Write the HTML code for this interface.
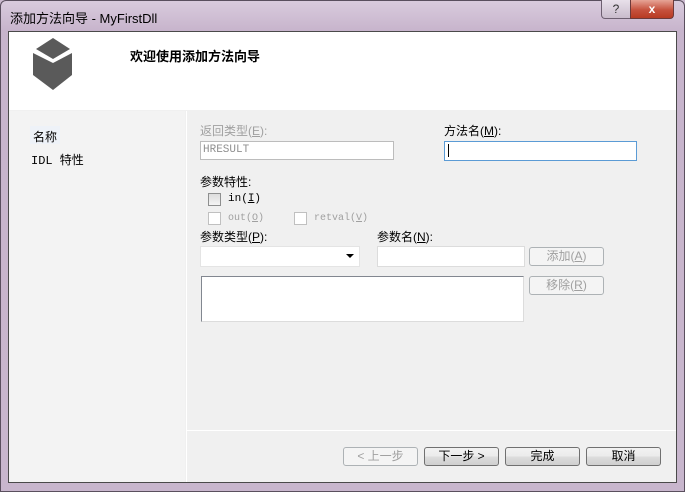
<!DOCTYPE html><html><head><style>
body{margin:0;width:685px;height:492px;overflow:hidden;background:#cbbacf;font-family:"Liberation Sans","Noto Sans CJK SC",sans-serif;font-size:12px;position:relative}
.a{position:absolute}
.frame{left:0;top:0;width:683px;height:490px;border:1px solid #5a4f5e;border-radius:6px 6px 0 0;background:linear-gradient(#d9cbdd,#c7b4cc 30px,#c8b6cd)}
.client{left:8px;top:31px;width:667px;height:450px;border:1px solid #4a4a4a;background:#f0f0f0}
.tb{font-family:"Liberation Mono","Noto Sans CJK SC",monospace;font-size:11px}
.in{background:#fff;border:1px solid #abadb3}
.btn{border:1px solid #707070;border-radius:3px;background:linear-gradient(#f2f2f2,#ebebeb 50%,#dddddd 51%,#cfcfcf);text-align:center;line-height:17px;font-size:12px}
.dis{border-color:#adb2b5;background:#f4f4f4;color:#a0a0a0}
.cb{width:11px;height:11px;border:1px solid #c0c0c0;background:#fff}
</style></head><body>
<div class="a frame"></div>
<div class="a" style="left:10px;top:8px;font-size:13px;color:#000">添加方法向导 - MyFirstDll</div>
<div class="a" style="left:601px;top:0;width:28px;height:18px;border:1px solid #6d5f70;border-top:0;border-radius:0 0 0 4px;background:linear-gradient(#e8e0ea,#c9bccc);text-align:center;color:#333;font-size:12px;line-height:18px">?</div>
<div class="a" style="left:630px;top:0;width:42px;height:18px;border:1px solid #6d3a3a;border-top:0;border-radius:0 0 4px 0;background:linear-gradient(#e6a497,#c6523e 55%,#b83a22);text-align:center;color:#fff;font-weight:bold;font-size:12px;line-height:18px">x</div>
<div class="a client"></div>
<div class="a" style="left:9px;top:32px;width:667px;height:78px;background:#fff"></div>
<svg class="a" style="left:0;top:0" width="90" height="100"><polygon points="53,38 70,49 53,59 36,49" fill="#5a5a5a"/><polygon points="33,53 53,63 72,53 72,75 53,90 33,75" fill="#5a5a5a"/></svg>
<div class="a" style="left:130px;top:46px;font-weight:bold;font-size:13px">欢迎使用添加方法向导</div>
<div class="a" style="left:9px;top:111px;width:176px;height:371px;background:#f3f3f3"></div>
<div class="a" style="left:186px;top:111px;width:1px;height:371px;background:#fff"></div>
<div class="a" style="left:187px;top:430px;width:489px;height:1px;background:#fff"></div>
<div class="a" style="left:30px;top:126px;width:30px;height:18px;background:#eef2f8"></div>
<div class="a" style="left:33px;top:128px">名称</div>
<div class="a tb" style="left:31px;top:151px;font-size:12px">IDL 特性</div>
<div class="a" style="left:200px;top:122px;color:#a0a0a0">返回类型(<u>E</u>):</div>
<div class="a in tb" style="left:200px;top:141px;width:190px;height:17px;border-color:#bcbcbc;color:#909090;line-height:17px;padding-left:2px">HRESULT</div>
<div class="a" style="left:444px;top:122px">方法名(<u>M</u>):</div>
<div class="a in" style="left:444px;top:141px;width:191px;height:18px;border-color:#5b9bd5"></div>
<div class="a" style="left:448px;top:144px;width:1px;height:13px;background:#000"></div>
<div class="a" style="left:200px;top:173px">参数特性:</div>
<div class="a cb" style="left:208px;top:193px;background:linear-gradient(#ddd,#f4f4f4);border-color:#8e8f8f"></div>
<div class="a tb" style="left:228px;top:193px">in(<u>I</u>)</div>
<div class="a cb" style="left:208px;top:212px"></div>
<div class="a tb" style="left:228px;top:213px;color:#a0a0a0;font-size:10px">out(<u>O</u>)</div>
<div class="a cb" style="left:294px;top:212px"></div>
<div class="a tb" style="left:314px;top:213px;color:#a0a0a0;font-size:10px">retval(<u>V</u>)</div>
<div class="a" style="left:200px;top:228px">参数类型(<u>P</u>):</div>
<div class="a" style="left:200px;top:246px;width:158px;height:19px;background:#fff;border:1px solid #e4e4e4"></div>
<div class="a" style="left:346px;top:254px;border-left:4px solid transparent;border-right:4px solid transparent;border-top:4px solid #000"></div>
<div class="a" style="left:377px;top:228px">参数名(<u>N</u>):</div>
<div class="a in" style="left:377px;top:246px;width:146px;height:19px;border-color:#dcdcdc"></div>
<div class="a btn dis" style="left:529px;top:247px;width:73px;height:17px">添加(<u>A</u>)</div>
<div class="a" style="left:201px;top:276px;width:321px;height:44px;background:#fff;border:1px solid #828790;border-right-color:#dcdcdc;border-bottom-color:#dcdcdc"></div>
<div class="a btn dis" style="left:529px;top:276px;width:73px;height:17px">移除(<u>R</u>)</div>
<div class="a btn dis" style="left:343px;top:447px;width:73px;height:17px">&lt; 上一步</div>
<div class="a btn" style="left:424px;top:447px;width:73px;height:17px">下一步 &gt;</div>
<div class="a btn" style="left:505px;top:447px;width:73px;height:17px">完成</div>
<div class="a btn" style="left:586px;top:447px;width:73px;height:17px">取消</div>
</body></html>
